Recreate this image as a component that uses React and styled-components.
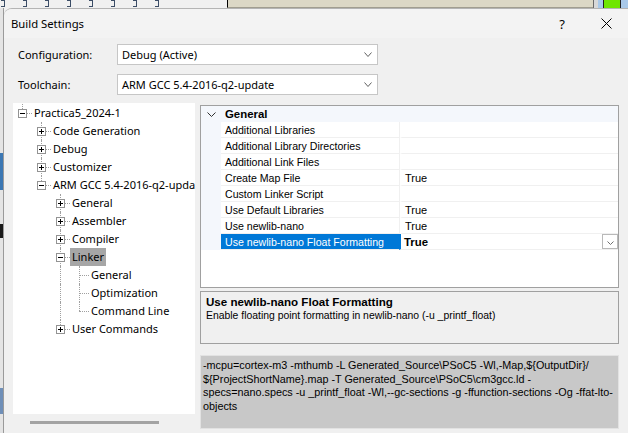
import React from "react";
import styled, { createGlobalStyle } from "styled-components";

const UI = `"Noto Sans", "Open Sans", sans-serif`;
const SANS = `"Liberation Sans", Arial, sans-serif`;

const GlobalStyle = createGlobalStyle`
  html, body { margin: 0; padding: 0; }
  body { background: #f0f0f0; overflow: hidden; }
`;

const Screen = styled.div`
  width: 628px;
  height: 433px;
  overflow: hidden;
  display: grid;
  grid-template-columns: 4px 1fr;
  grid-template-rows: 8px 1fr;
  background: #f0f0f0;
`;

// ---- background window bits ----
const TopStrip = styled.div`
  grid-column: 1 / 3;
  display: flex;
  height: 8px;
`;
const StripIcons = styled.div`
  width: 227px;
  display: flex;
  gap: 18px;
  padding-left: 1px;
  background: #f0f0f0;
`;
const StripMark = styled.span`
  width: 3px;
  height: 5px;
  border: 1px solid #3b4d66;
  border-left: none;
`;
const StripBeige = styled.div`
  width: 366px;
  height: 7px;
  background: #dcd8c6;
  border-left: 1px solid #000;
  border-bottom: 1px solid #a19e90;
`;
const StripTail = styled.div`
  flex: 1;
  display: flex;
  height: 8px;
  border-left: 1px solid #6a6a6a;
  background: #d8d8d8;
`;
const StripBlock = styled.span`
  width: ${(p) => p.$w}px;
  margin-left: ${(p) => p.$ml || 0}px;
  background: ${(p) => p.$c};
  border-left: ${(p) => (p.$edge ? "1px solid #222" : "none")};
`;

const LeftStrip = styled.div`
  background: #e4e4e4;
  border-right: 1px solid #9a9a9a;
  display: flex;
  flex-direction: column;
`;
const LeftBit = styled.span`
  height: ${(p) => p.$h}px;
  margin-top: ${(p) => p.$mt}px;
  background: ${(p) => p.$c};
`;

// ---- dialog ----
const Dialog = styled.div`
  display: flex;
  flex-direction: column;
  background: #f0f0f0;
  border-top: 1px solid #b4b4b4;
  border-top-left-radius: 8px;
  overflow: hidden;
`;

const TitleBar = styled.div`
  height: 29px;
  display: flex;
  align-items: center;
  background: #f3f3f3;
  font-family: ${UI};
  font-size: 11.3px;
  color: #000;
`;
const TitleText = styled.div`
  flex: 1;
  padding-left: 7px;
  padding-bottom: 1px;
`;
const CaptionButton = styled.div`
  width: 45px;
  height: 29px;
  display: flex;
  align-items: center;
  justify-content: center;
  font-size: 13px;
  padding-left: ${(p) => p.$shift || 0}px;
  box-sizing: border-box;
`;

const Form = styled.div`
  margin-top: 6px;
  padding-left: 14px;
  display: grid;
  grid-template-columns: 99px 261px;
  row-gap: 9px;
  align-items: center;
  font-family: ${UI};
  font-size: 11px;
  color: #000;
`;
const Label = styled.div`
  padding-bottom: 1px;
`;
const Combo = styled.div`
  height: 21px;
  box-sizing: border-box;
  background: #fff;
  border: 1px solid #c6c6c6;
  display: flex;
  align-items: center;
  justify-content: space-between;
  padding: 0 5px 1px 4px;
`;

const Main = styled.div`
  margin-top: 8px;
  padding: 0 9px;
  display: grid;
  grid-template-columns: 182px 1fr;
  column-gap: 5px;
  flex: 1;
  min-height: 0;
`;

// ---- tree ----
const TreeColumn = styled.div`
  display: flex;
  flex-direction: column;
  min-width: 0;
`;
const TreeBox = styled.div`
  height: 311px;
  background: #fff;
  padding-top: 1px;
  box-sizing: border-box;
  overflow: hidden;
  font-family: ${UI};
  font-size: 11px;
  color: #000;
`;
const TreeRow = styled.div`
  height: 18px;
  display: flex;
  align-items: stretch;
`;
const Guide = styled.span`
  position: relative;
  width: 19px;
  flex: none;
  &::before {
    content: "";
    display: ${(p) => (p.$line ? "block" : "none")};
    position: absolute;
    left: 9px;
    top: 0;
    bottom: 0;
    border-left: 1px dotted #a0a0a0;
  }
`;
const Connector = styled.span`
  position: relative;
  width: 19px;
  flex: none;
  display: flex;
  align-items: center;
  padding-left: 5px;
  box-sizing: border-box;
  &::before {
    content: "";
    position: absolute;
    left: 9px;
    top: 0;
    height: ${(p) => (p.$down ? "100%" : "50%")};
    border-left: 1px dotted #a0a0a0;
  }
  &::after {
    content: "";
    position: absolute;
    left: 9px;
    right: 0;
    top: 9px;
    border-top: 1px dotted #a0a0a0;
  }
`;
const Expander = styled.span`
  position: relative;
  z-index: 1;
  width: 9px;
  height: 9px;
  box-sizing: border-box;
  border: 1px solid #939393;
  background: #fff;
  &::before {
    content: "";
    position: absolute;
    left: 1px;
    top: 3px;
    width: 5px;
    height: 1px;
    background: #000;
  }
  &::after {
    content: "";
    display: ${(p) => (p.$open ? "none" : "block")};
    position: absolute;
    left: 3px;
    top: 1px;
    width: 1px;
    height: 5px;
    background: #000;
  }
`;
const NodeLabel = styled.span`
  display: flex;
  align-items: center;
  padding: 0 2px 1px 2px;
  white-space: nowrap;
  background: ${(p) => (p.$selected ? "#a6a6a6" : "transparent")};
`;
const ScrollTrack = styled.div`
  flex: 1;
  padding: 7px 0 0 17px;
`;
const ScrollThumb = styled.div`
  width: 129px;
  height: 3px;
  background: #a3a3a3;
`;

// ---- right side ----
const RightColumn = styled.div`
  display: flex;
  flex-direction: column;
  padding-top: 2px;
  font-family: ${SANS};
  font-size: 10.6px;
  color: #000;
`;
const PropGrid = styled.div`
  height: 183px;
  box-sizing: border-box;
  border: 1px solid #a0a0a0;
  background: #fff;
`;
const CategoryRow = styled.div`
  height: 16px;
  display: grid;
  grid-template-columns: 20px 1fr;
  align-items: center;
  background: #f4f7fc;
  font-weight: bold;
  font-size: 11.4px;
`;
const CategoryToggle = styled.span`
  display: flex;
  justify-content: center;
  padding-left: 1px;
`;
const CategoryName = styled.span`
  padding-left: 4px;
`;
const PropRow = styled.div`
  height: 16px;
  display: grid;
  grid-template-columns: 20px 179px 1fr;
`;
const Margin = styled.span`
  background: #f4f7fc;
`;
const NameCell = styled.span`
  display: flex;
  align-items: center;
  padding-left: 4px;
  white-space: nowrap;
  overflow: hidden;
  border-bottom: 1px solid #f0f0f0;
  border-right: 1px solid ${(p) => (p.$selected ? "#0078d7" : "#f0f0f0")};
  background: ${(p) => (p.$selected ? "#0078d7" : "transparent")};
  color: ${(p) => (p.$selected ? "#fff" : "#000")};
`;
const ValueCell = styled.span`
  display: flex;
  align-items: center;
  justify-content: space-between;
  padding-left: 3px;
  border-bottom: 1px solid #f0f0f0;
  border-left: 2px solid ${(p) => (p.$selected ? "#0078d7" : "transparent")};
  margin-left: ${(p) => (p.$selected ? "-1px" : "0")};
  font-weight: ${(p) => (p.$selected ? "bold" : "normal")};
  font-size: ${(p) => (p.$selected ? "11.4px" : "11px")};
`;
const DropButton = styled.span`
  width: 16px;
  height: 15px;
  box-sizing: border-box;
  align-self: flex-start;
  border: 1px solid #b9b9b9;
  background: #fff;
  display: flex;
  align-items: center;
  justify-content: center;
  padding-top: 2px;
`;

const Description = styled.div`
  margin-top: 3px;
  height: 53px;
  box-sizing: border-box;
  border: 1px solid #a0a0a0;
  background: #f0f0f0;
  padding: 3px 0 0 5px;
  line-height: 14px;
  font-size: 10.4px;
`;
const DescTitle = styled.div`
  font-weight: bold;
  font-size: 11.6px;
`;

const CommandBox = styled.div`
  margin-top: 11px;
  height: 74px;
  box-sizing: border-box;
  border: 1px solid #e2e2e2;
  background: #c8c8c8;
  padding: 3px 0 0 2px;
  line-height: 13.5px;
  font-size: 10.8px;
`;
const CommandLine = styled.div`
  white-space: pre;
`;

// ---- icons ----
const Chevron = ({ w = 7, h = 4, color = "#606060" }) => (
  <svg width={w + 1} height={h + 1} viewBox={`0 0 ${w + 1} ${h + 1}`}>
    <polyline
      points={`0.5,0.5 ${(w + 1) / 2},${h + 0.5} ${w + 0.5},0.5`}
      fill="none"
      stroke={color}
      strokeWidth="1"
    />
  </svg>
);

const CloseIcon = () => (
  <svg width="11" height="11" viewBox="0 0 11 11">
    <path d="M0.5 0.5 L10.5 10.5 M10.5 0.5 L0.5 10.5" stroke="#000" strokeWidth="1" />
  </svg>
);

// ---- data ----
const TREE = {
  label: "Practica5_2024-1",
  open: true,
  children: [
    { label: "Code Generation", closed: true },
    { label: "Debug", closed: true },
    { label: "Customizer", closed: true },
    {
      label: "ARM GCC 5.4-2016-q2-update",
      open: true,
      children: [
        { label: "General", closed: true },
        { label: "Assembler", closed: true },
        { label: "Compiler", closed: true },
        {
          label: "Linker",
          open: true,
          selected: true,
          children: [{ label: "General" }, { label: "Optimization" }, { label: "Command Line" }],
        },
        { label: "User Commands", closed: true },
      ],
    },
  ],
};

function flatten(node, guides, isLast, out) {
  out.push({ node, guides, isLast });
  if (node.open && node.children) {
    node.children.forEach((child, i) =>
      flatten(child, [...guides, !isLast], i === node.children.length - 1, out)
    );
  }
  return out;
}

const ROWS = flatten(TREE, [], true, []);

const PROPS = [
  { name: "Additional Libraries", value: "" },
  { name: "Additional Library Directories", value: "" },
  { name: "Additional Link Files", value: "" },
  { name: "Create Map File", value: "True" },
  { name: "Custom Linker Script", value: "" },
  { name: "Use Default Libraries", value: "True" },
  { name: "Use newlib-nano", value: "True" },
  { name: "Use newlib-nano Float Formatting", value: "True", selected: true },
];

const COMMAND = [
  "-mcpu=cortex-m3 -mthumb -L Generated_Source\\PSoC5 -Wl,-Map,${OutputDir}/",
  "${ProjectShortName}.map -T Generated_Source\\PSoC5\\cm3gcc.ld -",
  "specs=nano.specs -u _printf_float -Wl,--gc-sections -g -ffunction-sections -Og -ffat-lto-",
  "objects",
];

function Tree() {
  return (
    <TreeBox>
      {ROWS.map(({ node, guides, isLast }, i) => {
        const expandable = node.closed || node.open;
        return (
          <TreeRow key={i}>
            {guides.map((g, j) => (
              <Guide key={j} $line={g} />
            ))}
            <Connector $down={!isLast}>
              {expandable && <Expander $open={node.open} />}
            </Connector>
            <NodeLabel $selected={node.selected}>{node.label}</NodeLabel>
          </TreeRow>
        );
      })}
    </TreeBox>
  );
}

export default function App() {
  return (
    <>
      <GlobalStyle />
      <Screen>
        <TopStrip>
          <StripIcons>
            {Array.from({ length: 8 }).map((_, i) => (
              <StripMark key={i} />
            ))}
          </StripIcons>
          <StripBeige />
          <StripTail>
            <StripBlock $w={5} $ml={4} $c="#a9c9e9" />
            <StripBlock $w={16} $c="#6ee600" $edge />
            <StripBlock $w={7} $c="#a9c9e9" $edge />
          </StripTail>
        </TopStrip>
        <LeftStrip>
          <LeftBit $mt={145} $h={37} $c="#3c78b4" />
          <LeftBit $mt={34} $h={14} $c="#1a1a1a" />
          <LeftBit $mt={150} $h={26} $c="#6f8fb8" />
        </LeftStrip>
        <Dialog>
          <TitleBar>
            <TitleText>Build Settings</TitleText>
            <CaptionButton $shift={3}>?</CaptionButton>
            <CaptionButton $shift={2}>
              <CloseIcon />
            </CaptionButton>
          </TitleBar>

          <Form>
            <Label>Configuration:</Label>
            <Combo>
              Debug (Active)
              <Chevron />
            </Combo>
            <Label>Toolchain:</Label>
            <Combo>
              ARM GCC 5.4-2016-q2-update
              <Chevron />
            </Combo>
          </Form>

          <Main>
            <TreeColumn>
              <Tree />
              <ScrollTrack>
                <ScrollThumb />
              </ScrollTrack>
            </TreeColumn>

            <RightColumn>
              <PropGrid>
                <CategoryRow>
                  <CategoryToggle>
                    <Chevron w={8} h={4} color="#303030" />
                  </CategoryToggle>
                  <CategoryName>General</CategoryName>
                </CategoryRow>
                {PROPS.map((p) => (
                  <PropRow key={p.name}>
                    <Margin />
                    <NameCell $selected={p.selected}>{p.name}</NameCell>
                    <ValueCell $selected={p.selected}>
                      {p.value}
                      {p.selected && (
                        <DropButton>
                          <Chevron w={6} h={3} color="#707070" />
                        </DropButton>
                      )}
                    </ValueCell>
                  </PropRow>
                ))}
              </PropGrid>

              <Description>
                <DescTitle>Use newlib-nano Float Formatting</DescTitle>
                <div>Enable floating point formatting in newlib-nano (-u _printf_float)</div>
              </Description>

              <CommandBox>
                {COMMAND.map((line, i) => (
                  <CommandLine key={i}>{line}</CommandLine>
                ))}
              </CommandBox>
            </RightColumn>
          </Main>
        </Dialog>
      </Screen>
    </>
  );
}
